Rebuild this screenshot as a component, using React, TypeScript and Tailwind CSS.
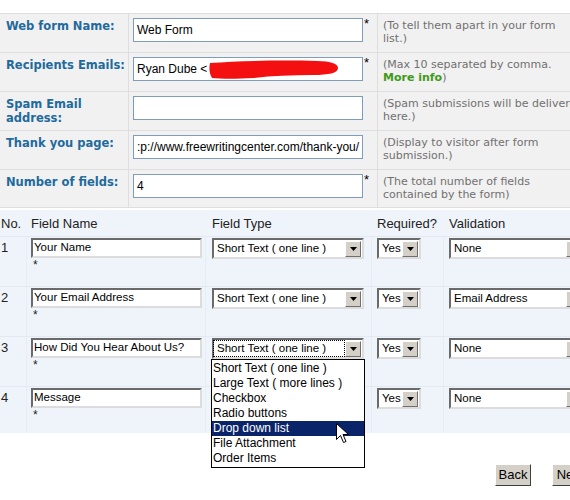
import type { ReactElement, ReactNode } from 'react';

const LABEL = 'font-["DejaVu_Sans",sans-serif] text-[11.5px] font-bold leading-[14px] text-[#1f6a9c] whitespace-nowrap';
const DESC = 'font-["DejaVu_Sans",sans-serif] text-[11px] leading-[12.5px] text-[#707070] whitespace-nowrap';

function TopRow({ label, input, star, desc, last }: { label: ReactNode; input: ReactNode; star?: boolean; desc: ReactNode; last?: boolean }): ReactElement {
  return (
    <div className={`grid grid-cols-[129px_249px_1fr] border-b border-[#dedede] ${last ? 'h-[38px]' : 'h-[39px]'}`}>
      <div className={`border-r border-[#dedede] pl-[6px] pt-[5px] ${LABEL}`}>{label}</div>
      <div className="flex items-start gap-[1px] border-r border-[#dedede] pl-[4px] pt-[4px]">
        {input}
        {star && <span className="font-['Liberation_Sans',sans-serif] text-[13px] leading-[12px]">*</span>}
      </div>
      <div className={`pl-[5px] pt-[6px] ${DESC}`}>{desc}</div>
    </div>
  );
}

function TextBox({ children, extra }: { children?: ReactNode; extra?: ReactNode }): ReactElement {
  return (
    <div className="relative flex h-[24px] w-[230px] items-center overflow-hidden whitespace-nowrap border border-[#7f9db9] bg-white pl-[3px] font-['Liberation_Sans',sans-serif] text-[12px] text-black">
      {children}
      {extra}
    </div>
  );
}

function Arrow(): ReactElement {
  return (
    <div className="flex h-[16px] w-[16px] shrink-0 items-center justify-center border border-b-[#6f6f6f] border-l-white border-r-[#6f6f6f] border-t-white bg-[#d4d0c8]">
      <svg width="7" height="4" viewBox="0 0 7 4">
        <path d="M0 0h7L3.5 4z" fill="#000" />
      </svg>
    </div>
  );
}

function Select({ width, value, focus }: { width: number; value: string; focus?: boolean }): ReactElement {
  return (
    <div
      className="flex h-[21px] shrink-0 items-center justify-between border-2 border-b-[#dcdcdc] border-l-[#6a6a6a] border-r-[#dcdcdc] border-t-[#6a6a6a] bg-white pr-[1px] font-['Liberation_Sans',sans-serif] text-[11.5px] text-black"
      style={{ width }}
    >
      <span
        className={`mr-[1px] flex-1 overflow-hidden whitespace-nowrap pl-[3px] leading-[15px] ${focus ? 'outline-1 outline-dotted outline-black' : ''}`}
      >
        {value}
      </span>
      <Arrow />
    </div>
  );
}

function NameBox({ value }: { value: string }): ReactElement {
  return (
    <div className="flex h-[20px] w-[171px] items-center border-2 border-b-[#dcdcdc] border-l-[#6a6a6a] border-r-[#dcdcdc] border-t-[#6a6a6a] bg-white pl-[1px] font-['Liberation_Sans',sans-serif] text-[11.5px] text-black">
      {value}
    </div>
  );
}

const fields = [
  { no: 1, name: 'Your Name', type: 'Short Text ( one line )', validation: 'None' },
  { no: 2, name: 'Your Email Address', type: 'Short Text ( one line )', validation: 'Email Address' },
  { no: 3, name: 'How Did You Hear About Us?', type: 'Short Text ( one line )', validation: 'None', focus: true },
  // row 4's type box sits under the open list
  { no: 4, name: 'Message', type: '', validation: 'None' },
];

const options = [
  'Short Text ( one line )',
  'Large Text ( more lines )',
  'Checkbox',
  'Radio buttons',
  'Drop down list',
  'File Attachment',
  'Order Items',
];

const GRID = 'grid grid-cols-[27px_179px_166px_72px_1fr]';
const CELL = 'border-r border-[#e6edf5]';

function Button({ children }: { children: ReactNode }): ReactElement {
  return (
    <div className="flex h-[22px] w-[36px] shrink-0 items-center justify-center border border-b-[#404040] border-l-white border-r-[#404040] border-t-white bg-[#d4d0c8] font-['Liberation_Sans',sans-serif] text-[13px] text-black">
      {children}
    </div>
  );
}

export default function App(): ReactElement {
  return (
    <div className="relative h-[500px] w-[570px] overflow-hidden bg-white">
      <div className="pt-[13px]">
        <div className="w-[640px] border-t border-[#dedede] bg-[#f1f1f1]">
          <TopRow
            label="Web form Name:"
            input={<TextBox>Web Form</TextBox>}
            star
            desc={<>(To tell them apart in your form<br />list.)</>}
          />
          <TopRow
            label="Recipients Emails:"
            input={
              <TextBox
                extra={
                  <svg className="absolute left-[75px] top-[1px]" width="130" height="21" viewBox="0 0 130 21">
                    <path
                      d="M1 4 C30 2 70 1 108 2 C122 2 129 5 129 9 C129 14 120 16 104 16 C82 16 62 17 44 19 C28 20 12 20 3 19 C0 14 0 8 1 4 Z"
                      fill="#f41010"
                    />
                  </svg>
                }
              >
                Ryan Dube &lt;
              </TextBox>
            }
            star
            desc={
              <>
                (Max 10 separated by comma.
                <br />
                <span className="font-bold text-[#3f9a18]">More info</span>)
              </>
            }
          />
          <TopRow
            label={<>Spam Email<br />address:</>}
            input={<TextBox />}
            desc={<>(Spam submissions will be delivered<br />here.)</>}
          />
          <TopRow
            label="Thank you page:"
            input={<TextBox>:p://www.freewritingcenter.com/thank-you/</TextBox>}
            desc={<>(Display to visitor after form<br />submission.)</>}
          />
          <TopRow
            label="Number of fields:"
            input={<TextBox>4</TextBox>}
            star
            last
            desc={<>(The total number of fields<br />contained by the form)</>}
          />
        </div>
      </div>

      <div className="mt-[2px] w-[640px] bg-[#eff4fa] font-['Liberation_Sans',sans-serif] text-[#222]">
        <div className={`${GRID} h-[26px] items-center text-[13px] leading-[15px]`}>
          <div className="pl-[1px]">No.</div>
          <div className="pl-[4px]">Field Name</div>
          <div className="pl-[6px]">Field Type</div>
          <div className="pl-[5px]">Required?</div>
          <div className="pl-[5px]">Validation</div>
        </div>
        {fields.map((f, i) => (
          <div key={f.no} className={`${GRID} border-t border-[#e2e9f1] ${i === 3 ? 'h-[47px]' : 'h-[50px]'}`}>
            <div className={`${CELL} pl-[1px] pt-[4px] text-[13px] leading-[14px]`}>{f.no}</div>
            <div className={`${CELL} pl-[4px] pt-[1px]`}>
              <NameBox value={f.name} />
              <div className="pl-[2px] pt-[1px] text-[12px] leading-[12px]">*</div>
            </div>
            <div className={`${CELL} pl-[6px] pt-[1px]`}>
              <Select width={152} value={f.type} focus={f.focus} />
            </div>
            <div className={`${CELL} pl-[5px] pt-[1px]`}>
              <Select width={44} value="Yes" />
            </div>
            <div className="pl-[5px] pt-[1px]">
              <Select width={136} value={f.validation} />
            </div>
          </div>
        ))}
      </div>

      <div className="mt-[31px] flex justify-end gap-[21px]">
        <Button>Back</Button>
        <div className="w-[18px] overflow-hidden">
          <Button>Next</Button>
        </div>
      </div>

      {/* open dropdown of row 3 */}
      <div className="absolute left-[211px] top-[359px] w-[154px] border border-black bg-white py-[1px] font-['Liberation_Sans',sans-serif] text-[12px] leading-[15px] text-black">
        {options.map((o) => (
          <div key={o} className={`pl-[1px] ${o === 'Drop down list' ? 'bg-[#0a246a] text-white' : ''}`}>
            {o}
          </div>
        ))}
      </div>

      {/* mouse pointer */}
      <svg className="absolute left-[336px] top-[423px]" width="13" height="21" viewBox="0 0 13 21">
        <path d="M0.5 0.5 V16.5 L4.5 12.5 L7.5 19.5 L10 18.5 L7 11.5 H12.5 Z" fill="#fff" stroke="#000" strokeWidth="1" />
      </svg>
    </div>
  );
}
